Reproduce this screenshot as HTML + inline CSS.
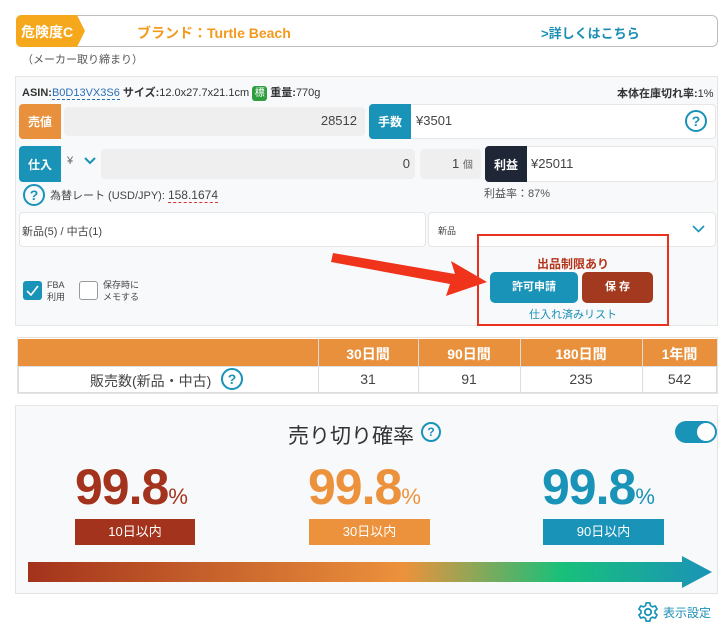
<!DOCTYPE html>
<html><head><meta charset="utf-8"><style>
*{box-sizing:border-box;margin:0;padding:0}
body{width:728px;height:628px;background:#fff;font-family:"Liberation Sans","Noto Sans CJK JP",sans-serif;color:#333;position:relative;overflow:hidden}
.a{position:absolute}
.q{position:absolute;width:22px;height:22px;border:2px solid #1a93b8;border-radius:50%;color:#1a93b8;font-size:14px;font-weight:bold;text-align:center;line-height:18px}
.lab{position:absolute;color:#fff;font-size:12px;font-weight:bold;display:flex;align-items:center;justify-content:center;border-radius:4px 0 0 4px}
.fld{position:absolute;border-radius:4px}
</style></head><body>
<div class="a" style="left:16px;top:15px;width:702px;height:32px;border:1px solid #bdbdbd;border-radius:6px"></div>
<svg class="a" style="left:16px;top:15px" width="86" height="32"><path d="M6 0H61L69 16 61 32H6Q0 32 0 26V6Q0 0 6 0Z" fill="#f5a81c"/></svg>
<div class="a" style="left:21px;top:22px;color:#fff;font-weight:bold;font-size:14px">危険度C</div>
<div class="a" style="left:137px;top:23px;color:#f39a1e;font-weight:bold;font-size:14px">ブランド：Turtle Beach</div>
<div class="a" style="left:541px;top:23px;color:#1a8fb5;font-weight:bold;font-size:13px">&gt;詳しくはこちら</div>
<div class="a" style="left:22px;top:51px;color:#555;font-size:11px">（メーカー取り締まり）</div>
<div class="a" style="left:15px;top:76px;width:703px;height:250px;background:#f7f9fb;border:1px solid #e6e6e6"></div>
<div class="a" style="left:22px;top:84px;font-size:11px;color:#333"><b>ASIN:</b><span style="color:#2a6db5;border-bottom:1px dashed #2a6db5">B0D13VX3S6</span> <b>サイズ:</b>12.0x27.7x21.1cm <span style="display:inline-block;background:#2f9e3e;color:#fff;font-size:10px;width:15px;height:15px;border-radius:3px;text-align:center;line-height:15px;vertical-align:middle">標</span> <b>重量:</b>770g</div>
<div class="a" style="left:617px;top:85px;font-size:11px;color:#333"><b>本体在庫切れ率:</b>1%</div>
<div class="lab" style="left:19px;top:104px;width:42px;height:35px;background:#e8903c">売値</div>
<div class="fld" style="left:64px;top:107px;width:301px;height:29px;background:#efefef"></div>
<div class="a" style="left:300px;top:113px;width:57px;text-align:right;font-size:13px;color:#444">28512</div>
<div class="fld" style="left:369px;top:104px;width:347px;height:35px;background:#fff;border:1px solid #e6e6e6"></div>
<div class="lab" style="left:369px;top:104px;width:42px;height:35px;background:#1a93b8">手数</div>
<div class="a" style="left:416px;top:113px;font-size:13px;color:#444">¥3501</div>
<div class="q" style="left:685px;top:110px">?</div>
<div class="lab" style="left:19px;top:146px;width:42px;height:36px;background:#1a93b8">仕入</div>
<div class="a" style="left:67px;top:155px;font-size:11px;color:#666">¥</div>
<svg class="a" style="left:84px;top:157px" width="12" height="8"><path d="M1 1L6 6 11 1" stroke="#1a93b8" stroke-width="2" fill="none"/></svg>
<div class="fld" style="left:101px;top:149px;width:314px;height:30px;background:#efefef"></div>
<div class="a" style="left:380px;top:156px;width:30px;text-align:right;font-size:13px;color:#444">0</div>
<div class="fld" style="left:420px;top:149px;width:61px;height:30px;background:#efefef"></div>
<div class="a" style="left:452px;top:156px;font-size:13px;color:#444">1 <span style="font-size:10px;color:#666">個</span></div>
<div class="fld" style="left:485px;top:146px;width:231px;height:36px;background:#fff;border:1px solid #e6e6e6"></div>
<div class="lab" style="left:485px;top:146px;width:42px;height:36px;background:#1f2636">利益</div>
<div class="a" style="left:531px;top:156px;font-size:13px;color:#444">¥25011</div>
<div class="q" style="left:23px;top:184px">?</div>
<div class="a" style="left:50px;top:187px;font-size:11px;color:#444">為替レート (USD/JPY): <span style="font-size:12px;border-bottom:1px dashed #d33">158.1674</span></div>
<div class="a" style="left:484px;top:185px;font-size:11px;color:#555">利益率：87%</div>
<div class="fld" style="left:19px;top:212px;width:407px;height:35px;background:#fff;border:1px solid #e6e6e6"></div>
<div class="a" style="left:22px;top:223px;font-size:11px;color:#444">新品(5) / 中古(1)</div>
<div class="fld" style="left:428px;top:212px;width:288px;height:35px;background:#fff;border:1px solid #e6e6e6"></div>
<div class="a" style="left:438px;top:224px;font-size:9px;color:#444">新品</div>
<svg class="a" style="left:692px;top:225px" width="13" height="8"><path d="M1 1L6.5 6.5 12 1" stroke="#1a93b8" stroke-width="1.6" fill="none"/></svg>
<div class="a" style="left:23px;top:281px;width:19px;height:19px;background:#1a93b8;border-radius:3px"></div>
<svg class="a" style="left:26px;top:285px" width="13" height="11"><path d="M1 6L5 10 12 1" stroke="#fff" stroke-width="1.6" fill="none"/></svg>
<div class="a" style="left:47px;top:279px;font-size:9px;line-height:12px;color:#444">FBA<br>利用</div>
<div class="a" style="left:79px;top:281px;width:19px;height:19px;border:1.5px solid #999;border-radius:3px;background:#fff"></div>
<div class="a" style="left:103px;top:279px;font-size:9px;line-height:12px;color:#444">保存時に<br>メモする</div>
<div class="a" style="left:477px;top:234px;width:192px;height:92px;border:2px solid #e8321f"></div>
<div class="a" style="left:477px;top:255px;width:192px;text-align:center;font-size:12px;font-weight:bold;color:#b5341a">出品制限あり</div>
<div class="a" style="left:490px;top:272px;width:88px;height:31px;background:#1a93b8;border-radius:5px;color:#fff;font-size:11px;font-weight:bold;text-align:center;line-height:31px">許可申請</div>
<div class="a" style="left:582px;top:272px;width:71px;height:31px;background:#a33a1f;border-radius:5px;color:#fff;font-size:11px;font-weight:bold;text-align:center;line-height:31px">保 存</div>
<div class="a" style="left:477px;top:306px;width:192px;text-align:center;font-size:11px;color:#1a8fb5">仕入れ済みリスト</div>
<svg class="a" style="left:0;top:0" width="728" height="628"><path d="M333 253L455 274 451 261 487 282 446 296 450 284 331 262Z" fill="#f0341c"/></svg>
<div class="a" style="left:17px;top:337px;width:701px;height:57px;border:1px solid #e4e4e4"></div>
<div class="a" style="left:18px;top:339px;width:699px;height:27px;background:#e8903c"></div>
<div class="a" style="left:18px;top:366px;width:699px;height:27px;border:1px solid #ddd;background:#fff"></div>
<div class="a" style="left:318px;top:339px;width:1px;height:54px;background:#ddd"></div>
<div class="a" style="left:418px;top:339px;width:1px;height:54px;background:#ddd"></div>
<div class="a" style="left:520px;top:339px;width:1px;height:54px;background:#ddd"></div>
<div class="a" style="left:642px;top:339px;width:1px;height:54px;background:#ddd"></div>
<div class="a" style="top:344px;left:318px;width:100px;text-align:center;color:#fff;font-weight:bold;font-size:14px">30日間</div>
<div class="a" style="top:344px;left:418px;width:102px;text-align:center;color:#fff;font-weight:bold;font-size:14px">90日間</div>
<div class="a" style="top:344px;left:520px;width:122px;text-align:center;color:#fff;font-weight:bold;font-size:14px">180日間</div>
<div class="a" style="top:344px;left:642px;width:75px;text-align:center;color:#fff;font-weight:bold;font-size:14px">1年間</div>
<div class="a" style="top:371px;left:90px;font-size:14px;color:#444">販売数(新品・中古)</div>
<div class="q" style="left:221px;top:368px">?</div>
<div class="a" style="top:371px;left:318px;width:100px;text-align:center;font-size:14px;color:#444">31</div>
<div class="a" style="top:371px;left:418px;width:102px;text-align:center;font-size:14px;color:#444">91</div>
<div class="a" style="top:371px;left:520px;width:122px;text-align:center;font-size:14px;color:#444">235</div>
<div class="a" style="top:371px;left:642px;width:75px;text-align:center;font-size:14px;color:#444">542</div>
<div class="a" style="left:15px;top:405px;width:703px;height:189px;background:#f8f9fb;border:1px solid #e4e4e4"></div>
<div class="a" style="left:288px;top:420px;font-size:21px;color:#333">売り切り確率</div>
<div class="q" style="left:421px;top:422px;width:20px;height:20px;font-size:12px;line-height:16px">?</div>
<div class="a" style="left:675px;top:421px;width:42px;height:22px;background:#1a93b8;border-radius:11px"></div>
<div class="a" style="left:697px;top:423px;width:18px;height:18px;background:#fff;border-radius:50%"></div>
<div class="a" style="left:75px;top:458px;width:125px;font-size:50px;font-weight:bold;color:#a3331c;letter-spacing:-1px">99.8<span style="font-size:22px;font-weight:normal">%</span></div>
<div class="a" style="left:308px;top:458px;width:125px;font-size:50px;font-weight:bold;color:#ec923c;letter-spacing:-1px">99.8<span style="font-size:22px;font-weight:normal">%</span></div>
<div class="a" style="left:542px;top:458px;width:125px;font-size:50px;font-weight:bold;color:#1a93b8;letter-spacing:-1px">99.8<span style="font-size:22px;font-weight:normal">%</span></div>
<div class="a" style="left:75px;top:519px;width:120px;height:26px;background:#a3331c;color:#fff;font-size:13px;text-align:center;line-height:26px">10日以内</div>
<div class="a" style="left:309px;top:519px;width:121px;height:26px;background:#ec923c;color:#fff;font-size:13px;text-align:center;line-height:26px">30日以内</div>
<div class="a" style="left:543px;top:519px;width:121px;height:26px;background:#1a93b8;color:#fff;font-size:13px;text-align:center;line-height:26px">90日以内</div>
<svg class="a" style="left:0;top:0" width="728" height="628"><defs><linearGradient id="g" x1="28" x2="712" gradientUnits="userSpaceOnUse"><stop offset="0" stop-color="#a3331c"/><stop offset=".55" stop-color="#ec923c"/><stop offset=".78" stop-color="#18c07a"/><stop offset="1" stop-color="#1a93b8"/></linearGradient></defs><path d="M28 562H682V556L712 572 682 588V582H28Z" fill="url(#g)"/></svg>
<svg class="a" style="left:637px;top:601px" width="22" height="22" viewBox="0 0 24 24"><circle cx="12" cy="12" r="3.5" fill="none" stroke="#1a93b8" stroke-width="2"/><path d="M10 2h4l.6 3 2.4 1.4 2.9-1 2 3.4-2.3 2v2.4l2.3 2-2 3.4-2.9-1-2.4 1.4-.6 3h-4l-.6-3-2.4-1.4-2.9 1-2-3.4 2.3-2v-2.4l-2.3-2 2-3.4 2.9 1L9.4 5z" fill="none" stroke="#1a93b8" stroke-width="1.8" stroke-linejoin="round"/></svg>
<div class="a" style="left:663px;top:604px;font-size:12px;color:#1a8fb5">表示設定</div>
</body></html>
